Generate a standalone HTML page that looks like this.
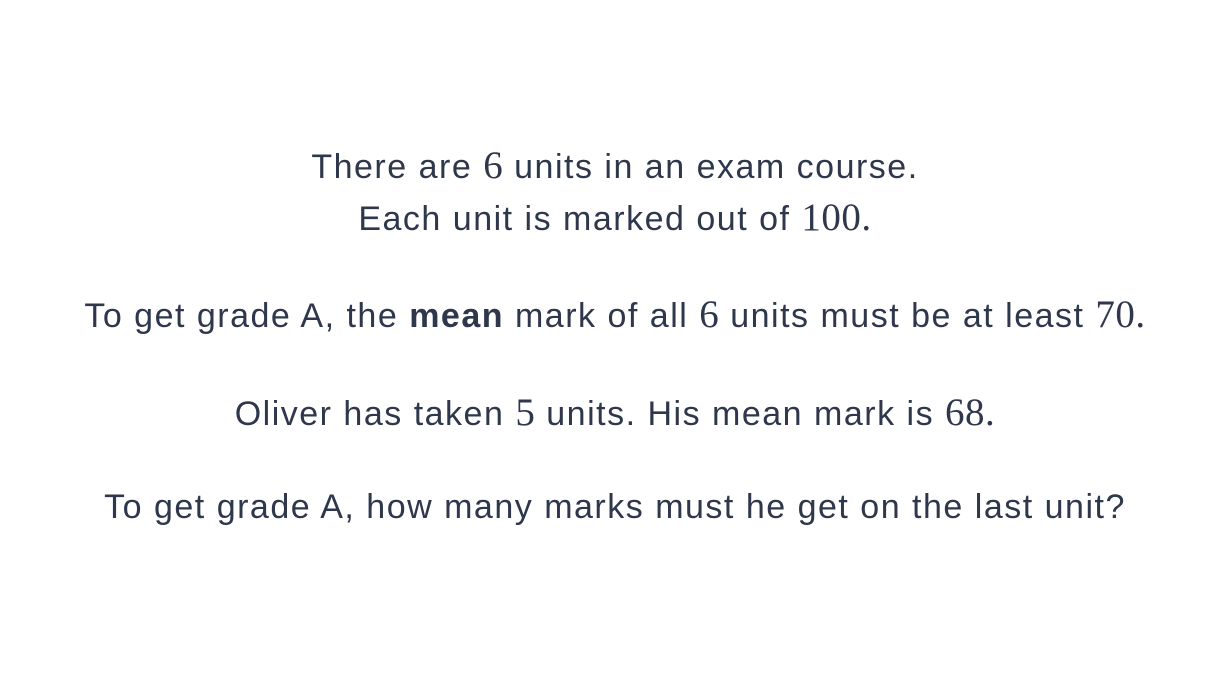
<!DOCTYPE html>
<html><head><meta charset="utf-8"><style>
html,body{margin:0;padding:0;background:#fff;width:1230px;height:673px;overflow:hidden}
.l{position:absolute;left:0;width:1230px;text-align:center;font-family:"Liberation Sans",sans-serif;font-size:34px;line-height:40px;color:#2e374b;white-space:nowrap;letter-spacing:1.5px}
.m{font-family:"Liberation Serif",serif;font-size:39px;letter-spacing:0.5px}
b{font-weight:bold}
</style></head><body>
<div class="l" style="top:146px">There are <span class="m">6</span> units in an exam course.</div>
<div class="l" style="top:198px">Each unit is marked out of <span class="m">100.</span></div>
<div class="l" style="top:295px">To get grade A, the <b>mean</b> mark of all <span class="m">6</span> units must be at least <span class="m">70.</span></div>
<div class="l" style="top:393px">Oliver has taken <span class="m">5</span> units. His mean mark is <span class="m">68.</span></div>
<div class="l" style="top:487px">To get grade A, how many marks must he get on the last unit?</div>
</body></html>
